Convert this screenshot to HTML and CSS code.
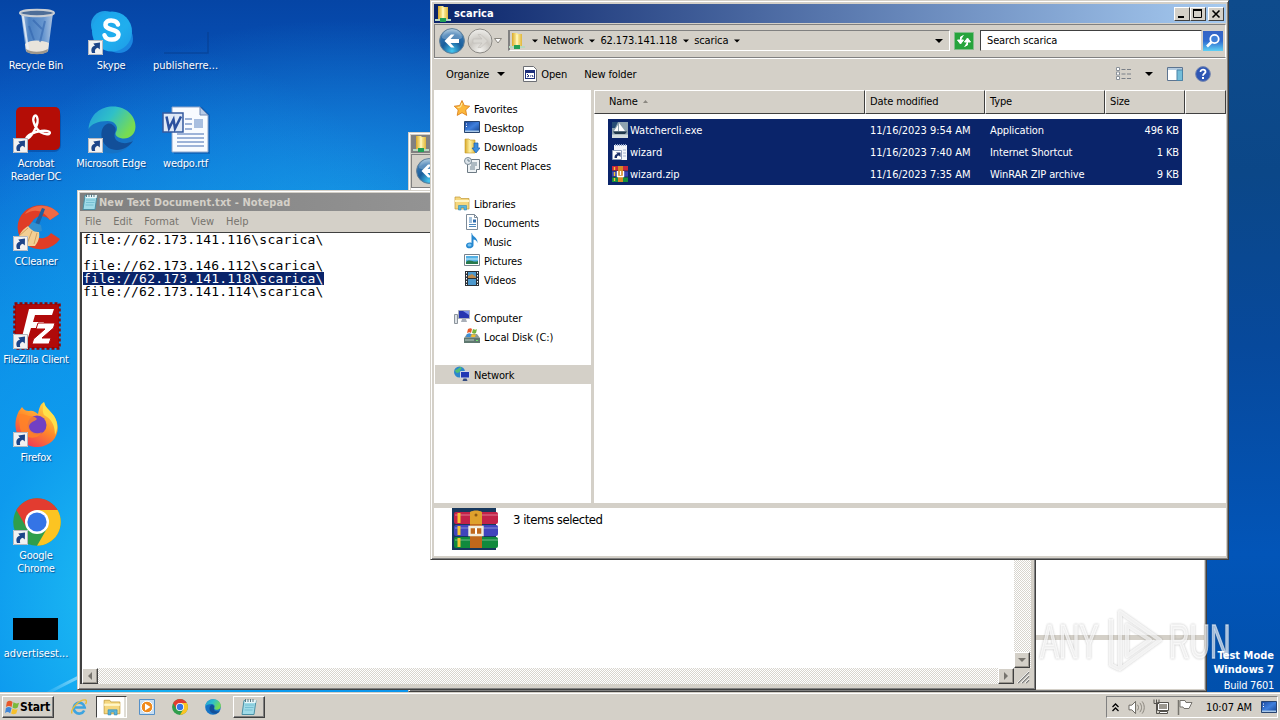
FILE: index.html
```html
<!DOCTYPE html>
<html lang="en">
<head>
    <meta charset="UTF-8">
    <meta name="viewport" content="width=device-width, initial-scale=1.0">
    <title>Desktop</title>
    <link rel="stylesheet" href="styles.css">
</head>
<body>
    <!-- Shared icons -->
    <svg width="0" height="0" class="defs">
        <defs>
            <linearGradient id="g-bin" x1="0" x2="1"><stop offset="0" stop-color="#d7e4f0"/><stop offset=".25" stop-color="#5d8fc8"/><stop offset=".7" stop-color="#7fa9d8"/><stop offset="1" stop-color="#d5e2ee"/></linearGradient>
            <linearGradient id="g-skype" x1="0" y1="0" x2="1" y2="1"><stop offset="0" stop-color="#1aa2ea"/><stop offset=".6" stop-color="#20aeee"/><stop offset="1" stop-color="#1e9ae6"/></linearGradient>
            <linearGradient id="g-edge" x1="0" y1="0" x2="1" y2=".5"><stop offset="0" stop-color="#2199dc"/><stop offset=".5" stop-color="#2fc0c8"/><stop offset="1" stop-color="#78dc50"/></linearGradient>
            <linearGradient id="g-fox" x1=".8" y1="0" x2=".2" y2="1"><stop offset="0" stop-color="#ffe04a"/><stop offset=".5" stop-color="#ff8a2a"/><stop offset="1" stop-color="#f0305a"/></linearGradient>
            <linearGradient id="g-folder" x1="0" y1="0" x2="1" y2="0"><stop offset="0" stop-color="#d9a928"/><stop offset=".5" stop-color="#fff2a4"/><stop offset="1" stop-color="#e0b63c"/></linearGradient>
            <linearGradient id="g-screen" x1="0" y1="0" x2="1" y2="1"><stop offset="0" stop-color="#16449c"/><stop offset=".5" stop-color="#3f7fdc"/><stop offset="1" stop-color="#12408c"/></linearGradient>
            <radialGradient id="g-back" cx=".5" cy=".9" r=".9"><stop offset="0" stop-color="#45c8f0"/><stop offset=".45" stop-color="#1a5f9c"/><stop offset=".75" stop-color="#2f70ac"/><stop offset="1" stop-color="#9ec0d8"/></radialGradient>
            <radialGradient id="g-fwd" cx=".5" cy=".9" r=".9"><stop offset="0" stop-color="#f4f3f0"/><stop offset=".5" stop-color="#c9c6c0"/><stop offset="1" stop-color="#efeeeb"/></radialGradient>
            <linearGradient id="g-search" x1="0" y1="0" x2="0" y2="1"><stop offset="0" stop-color="#3563c4"/><stop offset=".5" stop-color="#2f6cd0"/><stop offset="1" stop-color="#5ed0f4"/></linearGradient>
        </defs>

        <symbol id="i-shortcut" viewBox="0 0 15 15">
            <path d="M0 0h15v15H0z" fill="#f2f2f2"/><path d="M.5.5h14v14H.5z" fill="none" stroke="#b4b8c0"/>
            <path d="M4 13C2.500 9 4 6.300 7 5.800L5.300 3.500 12 2.500 11.800 9.500 9.800 7.800C7 8.500 6.500 10.500 7.200 13z" fill="#1c4488"/>
        </symbol>
        <symbol id="i-bin" viewBox="0 0 48 48">
            <path d="M8 5l5 38c4 4 18 4 22 0l5-38z" fill="url(#g-bin)" opacity=".8"/>
            <path d="M12 36c5-5 18-4 24-1l-1 8c-4 4-18 4-22 0z" fill="#e9e4dc"/>
            <path d="M13 41c6 4 17 3 22 0l-.5 3c-5 3-16 3-21 0z" fill="#9c968c"/>
            <path d="M16 18l5 14M32 13l-5 21M20 12l9 9" stroke="#2f62ac" stroke-width="2" opacity=".55"/>
            <path d="M10 8l5 33" stroke="#eef5fc" stroke-width="2" opacity=".8"/>
            <ellipse cx="24" cy="5" rx="17" ry="3.200" fill="#4e6e98" stroke="#c9ced4" stroke-width="2"/>
        </symbol>
        <symbol id="i-skype" viewBox="0 0 48 48">
            <circle cx="17" cy="17" r="14" fill="#1f9fe6"/><circle cx="31" cy="31" r="14" fill="#1a86e0"/>
            <circle cx="24" cy="23.500" r="20" fill="url(#g-skype)"/>
            <path d="M30 16.500c-1.500-5-12.500-6-12.500.3 0 6 13 3.500 13 10 0 6-12.500 6.500-14 .5" fill="none" stroke="#fff" stroke-width="4.500" stroke-linecap="round"/>
        </symbol>
        <symbol id="i-blank" viewBox="0 0 48 48"><path d="M2 45h44V24" fill="none" stroke="#063c8c" stroke-width="1.500" opacity=".6"/></symbol>
        <symbol id="i-acrobat" viewBox="0 0 48 48">
            <rect x="4" y="3" width="44" height="43" rx="7" fill="#053d90" opacity=".5"/>
            <rect x="3" y="1" width="44" height="43" rx="5" fill="#b40d06"/>
            <path d="M13 33c5 0 14-16 11-22-2-4-5 1-3 6 3 9 10 12 15 11 3-2-2-4-8-3-7 1-14 4-15 8z" fill="none" stroke="#fff" stroke-width="2.400"/>
        </symbol>
        <symbol id="i-edge" viewBox="0 0 48 48">
            <circle cx="24" cy="24" r="23.500" fill="#1673c6"/>
            <path d="M.5 23C2 8 13 .5 25 .5 39 .5 48 11 47.500 21c-.5 9-8 13-15 11-5-1.500-6-4-4-7 2-5-2-10-9-10C10 15 3 18 .5 23z" fill="url(#g-edge)"/>
            <path d="M19 18c-8 3-8 20 4 25 9 3 17-1 22-8-7 4-16 2-18-3-2-5 3-8-1-12-2-2-4-3-7-2z" fill="#124f99"/>
        </symbol>
        <symbol id="i-word" viewBox="0 0 48 48">
            <path d="M12 1h28l8 8v39H12z" fill="#0a4a9c" opacity=".45"/>
            <path d="M10 1h28l8 8v37H10z" fill="#f8fbff" stroke="#8fa4c8"/><path d="M38 1v8h8z" fill="#b9cbe6" stroke="#6f88b4"/>
            <path d="M23 13h7M23 18h7M23 23h7M15 28h27M15 32h27M15 36h27M15 40h27" stroke="#7f9ccc" stroke-width="1.500"/>
            <path d="M32 13h9v9h-9z" fill="#a9bfe0"/>
            <path d="M1 7h20v19H1z" fill="#dfe8f6" stroke="#35599f" stroke-width="1.500"/>
            <path d="M4.500 10.500l2.500 12 4.500-9 1.500 9 6-12" fill="none" stroke="#2a4f9e" stroke-width="2.500"/>
        </symbol>
        <symbol id="i-ccleaner" viewBox="0 0 48 48">
            <path d="M46 10A23 22 0 1 0 47 35L38 29A11 11 0 1 1 37 16z" fill="#df3d26"/>
            <path d="M46 10C38-1 19-1 12 10c10-6 18-4 25 6z" fill="#f06a44"/>
            <path d="M29 4l3 1-6 16-4-1z" fill="#205f9e"/>
            <path d="M19 18l9 3 1 6-9 2-6-5z" fill="#2f8fd0"/>
            <path d="M15 22c4 5 7 6 11 6 1 6-1 10-4 14H4c0-8 3-15 11-20z" fill="#f2cf94"/>
            <path d="M6 32l9-8M14 40l5-13M21 40l3-11" stroke="#d2a25e"/>
        </symbol>
        <symbol id="i-filezilla" viewBox="0 0 48 48">
            <path d="M2 2h44v44H2z" fill="#b00a0a"/><path d="M1.500 1.500h45v45h-45z" fill="none" stroke="#8c0606" stroke-width="2.500" stroke-dasharray="3 2"/>
            <path d="M16 7h25l-2 6H22l-2 7h11l-2 6H18l-4 13H8z" fill="#fff"/>
            <path d="M25 21h17l-1.500 5L29 36h9l-2 6H19l1.500-5L32 27h-9z" fill="#fff" stroke="#b00a0a"/>
        </symbol>
        <symbol id="i-firefox" viewBox="0 0 48 48">
            <path d="M5 13c1-3 3-4 4-6 2 3 4 4 7 4 4-1 6 1 9 3 1-5 2-10 6-12 1 6 6 8 10 14 9 14 1 30-16 31C9 48-3 31 5 13z" fill="url(#g-fox)"/>
            <circle cx="24" cy="25" r="9.500" fill="#7140c4"/>
            <path d="M5 14c6 0 8 1 11 2 4 0 7 1 8 3-3 3-6 2-8 7 0 6 7 9 13 6-4 9-20 7-22-4z" fill="#ff8228" opacity=".85"/>
            <path d="M31 2c1 6 6 8 10 14 4 7 4 13 1 19 0-9-3-16-11-20-2-4-1-9 0-13z" fill="#ffe04a"/>
        </symbol>
        <symbol id="i-chrome" viewBox="0 0 48 48">
            <circle cx="24" cy="24" r="23.800" fill="#2f9e4c"/>
            <path d="M24 24L3.400 12.100A23.800 23.800 0 0 1 44.600 12.100z" fill="#e23c30"/>
            <path d="M24 12.100h20.600A23.800 23.800 0 0 1 24 47.800l10.300-17.900z" fill="#fcc422"/>
            <path d="M3.400 12.100L13.700 30 24 24 24 12z" fill="#e23c30"/>
            <circle cx="24" cy="24" r="12" fill="#fff"/><circle cx="24" cy="24" r="9.600" fill="#3474e6"/>
        </symbol>
        <symbol id="i-black" viewBox="0 0 48 48"><path d="M0 22h45v22H0z"/></symbol>

        <symbol id="i-netfolder" viewBox="0 0 16 16">
            <path d="M3 0h5l1 1h4v12H3z" fill="url(#g-folder)"/><path d="M8 2v11" stroke="#fff9cc"/>
            <path d="M0 13h16v2H0z" fill="#b8d8c0"/><path d="M5 12h6v4H5z" fill="#22a055"/>
        </symbol>
        <symbol id="i-notepad" viewBox="0 0 16 16">
            <path d="M3 1.500h12l-2 14H1z" fill="#9fdbe8" stroke="#4a8fa4"/><path d="M4 1h11l-.4 3H3.500z" fill="#e8f6f8"/>
            <path d="M4.500 0v3M7 0v3M9.500 0v3M12 0v3" stroke="#587884"/><path d="M4 6h9M4 8.500h8.500M3.500 11h8" stroke="#6bb8cc" stroke-width=".8"/>
        </symbol>
        <symbol id="i-back" viewBox="0 0 26 26">
            <circle cx="13" cy="13" r="12.400" fill="url(#g-back)" stroke="#5c7c96"/>
            <path d="M3 10a10 9 0 0 1 20 0c-5 3-15 3-20 0z" fill="#fff" opacity=".25"/>
            <path d="M5.500 13L12 6.500h3.500L11.500 11H20v4h-8.500l4 4.500H12z" fill="#fff"/>
        </symbol>
        <symbol id="i-forward" viewBox="0 0 26 26">
            <circle cx="13" cy="13" r="12" fill="url(#g-fwd)" stroke="#8b8985"/>
            <path d="M20.500 13L14 6.500h-3l4 4.500H6v4h9l-4 4.500h3z" fill="#d9d7d2" stroke="#c1beb8" stroke-width=".6"/>
        </symbol>
        <symbol id="i-down" viewBox="0 0 8 8"><path d="M0 2h8L4 6z"/></symbol>
        <symbol id="i-refresh" viewBox="0 0 20 18">
            <path d="M.5.500h19v17H.5z" fill="#27a43c" stroke="#83bd8a"/>
            <path d="M9.500 3.500L6.500 5v4M3.500 8h6l-3 4z" fill="#fff" stroke="#fff"/><path d="M10.500 14.500l3-1.500V9M10.500 10h6l-3-4z" fill="#fff" stroke="#fff"/>
        </symbol>
        <symbol id="i-search" viewBox="0 0 20 20">
            <path d="M0 0h20v20H0z" fill="url(#g-search)"/><circle cx="11.500" cy="8" r="4.200" fill="#3f80d8" stroke="#fff" stroke-width="1.800"/>
            <path d="M8.500 11L4 15.500" stroke="#fff" stroke-width="2.600"/>
        </symbol>
        <symbol id="i-open" viewBox="0 0 16 16">
            <path d="M1.500.5h10l3 3v12h-13z" fill="#fff" stroke="#6c6e74"/><path d="M3 4h10v9H3z" fill="#1d2f7c"/><path d="M4 7h8v5H4z" fill="#fff"/>
            <path d="M5 8l2 2-2 1M8 10h1M10 9l1 2" fill="none" stroke="#1d2f7c"/>
        </symbol>
        <symbol id="i-views" viewBox="0 0 16 14">
            <path d="M.5.500h3v3h-3zM.5 5h3v3h-3zM.5 9.500h3v3h-3z" fill="#fff" stroke="#8b929a"/>
            <path d="M5.500 2.500h4M11 2.500h4M5.500 7h4M11 7h4M5.500 11.500h4M11 11.500h4" stroke="#7a8088"/>
        </symbol>
        <symbol id="i-pane" viewBox="0 0 16 14"><path d="M.5.500h15v13H.5z" fill="#fff" stroke="#5d7490"/><path d="M1 1h14v2H1z" fill="#b4cbe0"/><path d="M10 3h5.500v10.500H10z" fill="#74bdd8" stroke="#4b84a8"/></symbol>
        <symbol id="i-help" viewBox="0 0 16 16">
            <circle cx="8" cy="8" r="7.400" fill="#2e56b4" stroke="#7b8bb0"/><path d="M5.500 6c0-3.500 5.500-3 5 0C10.200 7.700 8 7.500 8 9.800" fill="none" stroke="#fff" stroke-width="1.800"/><path d="M7 11h2v2H7z" fill="#fff"/>
        </symbol>

        <symbol id="i-star" viewBox="0 0 16 16"><path d="M8 .5l2.300 5 5.400.7-4 3.700 1 5.500L8 12.700l-4.800 2.700 1-5.500-4-3.700 5.500-.7z" fill="#fcb83c" stroke="#d87a14" stroke-width=".8"/><path d="M8 3L6.500 7l-3 .5" fill="none" stroke="#fff0a8"/></symbol>
        <symbol id="i-desktop" viewBox="0 0 16 16"><path d="M.5 2.500h15v11H.5z" fill="url(#g-screen)" stroke="#274470"/><path d="M1 11.500h14v1.500H1z" fill="#a9c8e8"/><path d="M2 5h1M2 7.500h1" stroke="#fff"/></symbol>
        <symbol id="i-downloads" viewBox="0 0 16 16"><path d="M1 1h4l1 1h5v13H1z" fill="url(#g-folder)" stroke="#c49a2c" stroke-width=".6"/><path d="M10 5h4v5h2l-4 5-4-5h2z" fill="#3b8ee0" stroke="#1b5ca8" stroke-width=".7"/></symbol>
        <symbol id="i-recent" viewBox="0 0 16 16"><path d="M5.500 2.500h10v10h-3v3h-9v-10h2z" fill="#eef2f4" stroke="#6d7a84"/><circle cx="4" cy="4" r="3.500" fill="#dce4ea" stroke="#7c8c98"/><path d="M4 2v2h2M7 6h6M7 8h6M6 10h5M6 12h5" fill="none" stroke="#6c8290"/></symbol>
        <symbol id="i-libraries" viewBox="0 0 16 16"><path d="M1 2h5l1 1.500h8V14H1z" fill="#f5d77e" stroke="#c29a38" stroke-width=".7"/><path d="M1 6h14" stroke="#fff6c8" stroke-width="2"/><path d="M4.500 15v-4.500h8V15h-2.500v-2.500H7V15z" fill="#58b6dc" stroke="#3488b4" stroke-width=".6"/></symbol>
        <symbol id="i-doc" viewBox="0 0 16 16"><path d="M2.500.5h8l3 3v12h-11z" fill="#fff" stroke="#7c8a98"/><path d="M10.500.500v3h3" fill="none" stroke="#7c8a98"/><path d="M5 4h3M5 6h3M5 8h3M5 10.500h7M5 12.500h7" stroke="#4b86bc"/><path d="M9 5.500h3v3H9z" fill="#2f6cac"/></symbol>
        <symbol id="i-music" viewBox="0 0 16 16"><path d="M8 0c0 4 6 4 5.500 10C12.500 7 11 6.500 9.500 6.500v6C9 16 2 16.500 2 12.500 2 10 5.500 9 7.500 10V0z" fill="#2688d0"/><ellipse cx="5.500" cy="12" rx="2" ry="1.500" fill="#74c0f0"/></symbol>
        <symbol id="i-pictures" viewBox="0 0 16 16"><path d="M.5 2.500h15v11H.5z" fill="#fff" stroke="#78828c"/><path d="M2 4h12v8H2z" fill="#53b0e4"/><path d="M2 10c4-4 7 1 12-1v3H2z" fill="#28794c"/><path d="M2 7h12" stroke="#c5ecfa"/></symbol>
        <symbol id="i-videos" viewBox="0 0 16 16"><path d="M1 0h14v15H1z" fill="#2b3036"/><path d="M4 1h8v6H4zM4 8h8v6H4z" fill="#4c98cc"/><path d="M4 5l4-2 4 3v1H4z" fill="#bf8c4c"/><path d="M2.500 1v13M13.500 1v13" stroke="#fff" stroke-dasharray="1.500 1.500"/></symbol>
        <symbol id="i-computer" viewBox="0 0 16 16"><path d="M.5 5.500h3v9h-3z" fill="#dde2e6" stroke="#8c949c"/><path d="M4.500 1.500h11v8h-11z" fill="#2536b0" stroke="#a9b0bc"/><path d="M9 2h6v4z" fill="#7a92ea"/><path d="M8 10h4l1 3H7z" fill="#a9afb8"/></symbol>
        <symbol id="i-disk" viewBox="0 0 16 16"><path d="M0 10l3-4h10l3 4v5H0z" fill="#8d9a96"/><path d="M0 10h16v5H0z" fill="#5f7870"/><path d="M1 12h9" stroke="#b9cac4"/><path d="M12 12h2v1h-2z" fill="#6fe06c"/><path d="M4 1c2-1 3-1 4 0L7 5c-1-1-2-1-4 0z" fill="#ea5a28"/><path d="M9 1c2 1 3 1 4 0l-1 4c-1 1-2 1-4 0z" fill="#76b43c"/><path d="M3 6c2-1 3-1 4 0L6 9H2z" fill="#3d8ed4"/><path d="M8 6c2 1 3 1 4 0l-1 3H7z" fill="#f2c02c"/></symbol>
        <symbol id="i-network" viewBox="0 0 16 16"><circle cx="5.500" cy="6" r="5.500" fill="#2c86cc"/><path d="M1 4c3 0 4-3 6-3 2 2-2 3-1 5-2 1-4 2-5-2z" fill="#4ebe74"/><path d="M6.500 5.500h9v6.500h-9z" fill="#2038b4" stroke="#d0d8e4"/><path d="M9.500 12.500h3l1 2.500h-5z" fill="#334a80"/></symbol>

        <symbol id="i-exe" viewBox="0 0 16 16"><path d="M0 0h16v16H0z" fill="#8fa3b0"/><path d="M0 0h6l-3 6H0z" fill="#254b74"/><path d="M7 1l6 8H7zM6 3v6H2z" fill="#fff"/><path d="M1 9.500h14l-2 2.500H3z" fill="#20384c"/><path d="M0 12.500h16V16H0z" fill="#d4dde0"/></symbol>
        <symbol id="i-url" viewBox="0 0 16 16"><path d="M2 1h13v15H2z" fill="#f3f5fa"/><path d="M3 1h12" stroke="#93a7cc" stroke-width="2" stroke-dasharray="1 1"/><path d="M.5 6.500h9v9h-9z" fill="#fff" stroke="#8d9cba"/><path d="M2.500 14c0-3 1-4 3-4L4 8.500h4.500V13L7 11.500c-2 0-2 1-2 2.500z" fill="#1b2f68"/><path d="M11 6h3M11 9h3M11 12h3" stroke="#a5b3ce"/></symbol>
        <symbol id="i-rar" viewBox="0 0 46 42">
            <path d="M0 0h44v42H0z" fill="#17385e"/>
            <rect x="2" y="4" width="44" height="12" rx="2" fill="#c32248"/><rect x="2" y="17" width="44" height="11" rx="2" fill="#4144bd"/><rect x="2" y="29" width="44" height="11" rx="2" fill="#118a3d"/>
            <path d="M3 7h43M3 20h43M3 32h43" stroke="#fff" stroke-width="2" opacity=".2"/>
            <path d="M7 5v10M7 18v9M7 30v9" stroke="#f6c530" stroke-width="3"/>
            <path d="M18 4c3-2 9-2 12 0v13H18z" fill="#dfa12c"/><path d="M18 16h12v24H18z" fill="#c0681c"/>
            <path d="M17.500 19v8h13v-8z" fill="none" stroke="#f0ecdc" stroke-width="2.400"/><path d="M24 20v6" stroke="#fff" stroke-width="2"/><circle cx="24" cy="7" r="1.500" fill="#8c5b14"/>
        </symbol>
        <symbol id="i-zip" viewBox="0 0 16 16">
            <path d="M0 0h16v5H0z" fill="#c8283c"/><path d="M0 5h16v6H0z" fill="#3a44b4"/><path d="M0 11h16v5H0z" fill="#16903c"/>
            <path d="M0 5h16M0 11h16" stroke="#122450" stroke-width=".8"/><path d="M2.500 1v3M2.500 6v4M2.500 12v3" stroke="#f6c530" stroke-width="1.400"/>
            <path d="M6 0h5v16H6z" fill="#d68a24"/><path d="M5.500 5v5.500h6V5M8.500 5v4" fill="none" stroke="#fff" stroke-width="1.400"/>
        </symbol>

        <symbol id="i-flag" viewBox="0 0 16 16"><path d="M2 2c2-1.500 4-1.500 6 0L7 7.500c-2-1.500-4-1.500-6 0z" fill="#e8582a"/><path d="M9 2.500c2 1.500 4 1.500 6 .5l-1.500 5c-2 1.500-4 1-5.500 0z" fill="#7bb93c"/><path d="M1 8.500c2-1.500 4-1.500 6 0L5.500 14c-2-1.500-4-1.500-5.500 0z" fill="#3f86d8"/><path d="M8 9c2 1.500 4 1.500 5.500.5L12 14.500c-2 1-4 1-5.500 0z" fill="#f7c02c"/></symbol>
        <symbol id="i-ie" viewBox="0 0 16 16"><path d="M13.200 11.500A5.500 5.500 0 1 1 13.700 8.500H4" fill="none" stroke="#3da4e0" stroke-width="2.600"/><path d="M1 14.500C-1 10 9 0 14.500 1c1.500.5 1 2.500 0 4" fill="none" stroke="#e8bc38" stroke-width="1.400"/></symbol>
        <symbol id="i-wmp" viewBox="0 0 16 16"><path d="M.5.500h15v15H.5z" fill="#c8def2" stroke="#5590c8"/><circle cx="8" cy="8" r="5.800" fill="#f08a1c" stroke="#fff"/><path d="M6 4.500L11.500 8 6 11.500z" fill="#fff"/></symbol>
        <symbol id="i-speaker" viewBox="0 0 18 16"><path d="M1 5.500h3l4-4v13l-4-4H1z" fill="#fff" stroke="#65625c"/><path d="M10 5c1.500 2 1.500 4 0 6M12.500 3c2.500 3 2.500 7 0 10M15 1.500c3 4 3 9 0 13" fill="none" stroke="#858179"/></symbol>
        <symbol id="i-traynet" viewBox="0 0 16 16"><path d="M4.500 3.500h11v8h-11z" fill="#fff" stroke="#55524d"/><path d="M6 5h8v5H6z" fill="#9b978f"/><path d="M6.500 12.500h8v2h-8z" fill="#fff" stroke="#55524d"/><path d="M1 .5v4h5v-4M3.500 .5v14h3" fill="none" stroke="#55524d"/></symbol>
        <symbol id="i-trayflag" viewBox="0 0 16 16"><path d="M1.500 1v15" stroke="#77746e" stroke-width="1.500"/><path d="M3 1.500h5l1 2h6l-3 6H7l-1-1.500H3z" fill="#fff" stroke="#77746e"/></symbol>
    </svg>

    <div class="desktop">
        <div class="streak"></div>
        <div class="shortcuts">
            <div class="shortcut"><div class="shortcut-icon"><svg><use href="#i-bin"/></svg></div><span>Recycle Bin</span></div>
            <div class="shortcut"><div class="shortcut-icon"><svg><use href="#i-acrobat"/></svg><svg class="badge"><use href="#i-shortcut"/></svg></div><span>Acrobat<br>Reader DC</span></div>
            <div class="shortcut"><div class="shortcut-icon"><svg><use href="#i-ccleaner"/></svg><svg class="badge"><use href="#i-shortcut"/></svg></div><span>CCleaner</span></div>
            <div class="shortcut"><div class="shortcut-icon"><svg><use href="#i-filezilla"/></svg><svg class="badge"><use href="#i-shortcut"/></svg></div><span>FileZilla Client</span></div>
            <div class="shortcut"><div class="shortcut-icon"><svg><use href="#i-firefox"/></svg><svg class="badge"><use href="#i-shortcut"/></svg></div><span>Firefox</span></div>
            <div class="shortcut"><div class="shortcut-icon"><svg><use href="#i-chrome"/></svg><svg class="badge"><use href="#i-shortcut"/></svg></div><span>Google<br>Chrome</span></div>
            <div class="shortcut"><div class="shortcut-icon"><svg><use href="#i-black"/></svg></div><span class="clipped">advertisest...</span></div>
            <div class="shortcut"><div class="shortcut-icon"><svg><use href="#i-skype"/></svg><svg class="badge"><use href="#i-shortcut"/></svg></div><span>Skype</span></div>
            <div class="shortcut"><div class="shortcut-icon"><svg><use href="#i-edge"/></svg><svg class="badge"><use href="#i-shortcut"/></svg></div><span>Microsoft Edge</span></div>
            <div class="shortcut third"><div class="shortcut-icon"><svg><use href="#i-blank"/></svg></div><span class="clipped">publisherre...</span></div>
            <div class="shortcut third second-row"><div class="shortcut-icon"><svg><use href="#i-word"/></svg></div><span>wedpo.rtf</span></div>
        </div>

        <!-- Explorer window at the back -->
        <div class="window window-back">
            <div class="titlebar inactive"><svg class="icon16"><use href="#i-netfolder"/></svg></div>
            <div class="navbar"><svg class="nav-back"><use href="#i-back"/></svg></div>
            <div class="back-content"></div>
            <div class="back-details"></div>
        </div>

        <!-- Notepad -->
        <div class="window notepad">
            <div class="titlebar inactive"><svg class="icon16"><use href="#i-notepad"/></svg><span class="title">New Text Document.txt - Notepad</span></div>
            <div class="menu"><span>File</span><span>Edit</span><span>Format</span><span>View</span><span>Help</span></div>
            <div class="editor">
                <div class="text">
                    <div>file://62.173.141.116\scarica\</div>
                    <div>&nbsp;</div>
                    <div>file://62.173.146.112\scarica\</div>
                    <div><span class="marked">file://62.173.141.118\scarica\</span></div>
                    <div>file://62.173.141.114\scarica\</div>
                </div>
                <div class="scroll-v"><div class="scroll-btn"><svg><use href="#i-down"/></svg></div></div>
                <div class="scroll-h">
                    <div class="scroll-btn left"><svg><use href="#i-down"/></svg></div>
                    <div class="scroll-btn right"><svg><use href="#i-down"/></svg></div>
                </div>
                <svg class="grip" viewBox="0 0 17 16"><path d="M0 0h17v16H0z" fill="#d4d0c8"/><path d="M4 15L15 4M8 15l7-7M12 15l3-3" stroke="#808080" stroke-width="1.500"/><path d="M3 15L15 3M7 15l8-8M11 15l4-4" stroke="#fff" stroke-width=".8"/></svg>
            </div>
        </div>

        <!-- Explorer -->
        <div class="window explorer">
            <div class="titlebar">
                <svg class="icon16"><use href="#i-netfolder"/></svg><span class="title">scarica</span>
                <div class="caption-btns">
                    <div class="caption-btn"><svg viewBox="0 0 14 12"><path d="M3 9h6" stroke="#000" stroke-width="2"/></svg></div>
                    <div class="caption-btn"><svg viewBox="0 0 14 12"><path d="M2.500 2.500h8v7h-8z" fill="none" stroke="#000"/><path d="M2 2h9" stroke="#000" stroke-width="2"/></svg></div>
                    <div class="caption-btn close"><svg viewBox="0 0 14 12"><path d="M3.500 2.500l7 7M10.500 2.500l-7 7" stroke="#000" stroke-width="1.600"/></svg></div>
                </div>
            </div>
            <div class="navbar">
                <svg class="nav-back"><use href="#i-back"/></svg>
                <svg class="nav-forward"><use href="#i-forward"/></svg>
                <svg class="nav-history" viewBox="0 0 8 6"><path d="M.5.5h7L4 5z" fill="#fff" stroke="#8a8780"/></svg>
                <div class="address">
                    <svg class="icon16"><use href="#i-netfolder"/></svg>
                    <svg class="arrow first"><use href="#i-down"/></svg>
                    <span>Network</span><svg class="arrow"><use href="#i-down"/></svg>
                    <span>62.173.141.118</span><svg class="arrow"><use href="#i-down"/></svg>
                    <span>scarica</span><svg class="arrow"><use href="#i-down"/></svg>
                    <svg class="arrow last"><use href="#i-down"/></svg>
                </div>
                <svg class="refresh"><use href="#i-refresh"/></svg>
                <div class="search">Search scarica</div>
                <svg class="search-btn"><use href="#i-search"/></svg>
            </div>
            <div class="toolbar">
                <span>Organize</span><svg class="arrow"><use href="#i-down"/></svg>
                <svg class="icon16 open-icon"><use href="#i-open"/></svg><span>Open</span>
                <span class="new-folder">New folder</span>
                <div class="toolbar-right">
                    <svg class="views"><use href="#i-views"/></svg>
                    <svg class="arrow"><use href="#i-down"/></svg>
                    <svg class="views pane"><use href="#i-pane"/></svg>
                    <svg class="icon16"><use href="#i-help"/></svg>
                </div>
            </div>
            <div class="main">
                <div class="tree">
                    <div class="node"><svg class="icon16"><use href="#i-star"/></svg><span>Favorites</span></div>
                    <div class="node child"><svg class="icon16"><use href="#i-desktop"/></svg><span>Desktop</span></div>
                    <div class="node child"><svg class="icon16"><use href="#i-downloads"/></svg><span>Downloads</span></div>
                    <div class="node child"><svg class="icon16"><use href="#i-recent"/></svg><span>Recent Places</span></div>
                    <div class="node group"><svg class="icon16"><use href="#i-libraries"/></svg><span>Libraries</span></div>
                    <div class="node child"><svg class="icon16"><use href="#i-doc"/></svg><span>Documents</span></div>
                    <div class="node child"><svg class="icon16"><use href="#i-music"/></svg><span>Music</span></div>
                    <div class="node child"><svg class="icon16"><use href="#i-pictures"/></svg><span>Pictures</span></div>
                    <div class="node child"><svg class="icon16"><use href="#i-videos"/></svg><span>Videos</span></div>
                    <div class="node group"><svg class="icon16"><use href="#i-computer"/></svg><span>Computer</span></div>
                    <div class="node child"><svg class="icon16"><use href="#i-disk"/></svg><span>Local Disk (C:)</span></div>
                    <div class="node group current"><svg class="icon16"><use href="#i-network"/></svg><span>Network</span></div>
                </div>
                <div class="list">
                    <div class="columns">
                        <div>Name <svg class="sort" viewBox="0 0 5 3"><path d="M0 3h5L2.500 0z" fill="#8a8780"/></svg></div>
                        <div>Date modified</div><div>Type</div><div>Size</div><div></div>
                    </div>
                    <div class="files">
                        <div class="file"><span class="name"><svg class="icon16"><use href="#i-exe"/></svg>Watchercli.exe</span><span class="date">11/16/2023 9:54 AM</span><span>Application</span><span class="size">496 KB</span></div>
                        <div class="file"><span class="name"><svg class="icon16"><use href="#i-url"/></svg>wizard</span><span class="date">11/16/2023 7:40 AM</span><span>Internet Shortcut</span><span class="size">1 KB</span></div>
                        <div class="file"><span class="name"><svg class="icon16"><use href="#i-zip"/></svg>wizard.zip</span><span class="date">11/16/2023 7:35 AM</span><span>WinRAR ZIP archive</span><span class="size">9 KB</span></div>
                    </div>
                </div>
            </div>
            <div class="details">
                <svg class="preview"><use href="#i-rar"/></svg>
                <span>3 items selected</span>
            </div>
        </div>

        <div class="watermark">
            <span>ANY</span>
            <svg viewBox="0 0 56 64"><path d="M13 3L53 31 13 60zM4 10v46l8 4M20 16l23 15-23 16z" fill="none" stroke="#fff" stroke-width="4" stroke-linejoin="round"/></svg>
            <span>RUN</span>
        </div>

        <div class="build"><b>Test Mode</b><b>Windows 7</b><span>Build 7601</span></div>

        <div class="taskbar">
            <div class="start"><svg><use href="#i-flag"/></svg>Start</div>
            <div class="task ie"><svg class="icon16"><use href="#i-ie"/></svg></div>
            <div class="task pressed"><svg><use href="#i-libraries"/></svg></div>
            <div class="task"><svg class="icon16"><use href="#i-wmp"/></svg></div>
            <div class="task"><svg class="icon16"><use href="#i-chrome"/></svg></div>
            <div class="task"><svg class="icon16"><use href="#i-edge"/></svg></div>
            <div class="task raised"><svg class="icon16"><use href="#i-notepad"/></svg></div>
            <div class="tray">
                <svg class="chevron" viewBox="0 0 7 9"><path d="M.5 4l3-3 3 3M.5 8l3-3 3 3" fill="none" stroke="#000" stroke-width="1.300"/></svg>
                <svg class="speaker"><use href="#i-speaker"/></svg>
                <svg class="icon16"><use href="#i-traynet"/></svg>
                <svg class="icon16"><use href="#i-trayflag"/></svg>
                <span class="clock">10:07 AM</span>
                <svg class="icon16"><use href="#i-desktop"/></svg>
            </div>
        </div>
    </div>
</body>
</html>
```
FILE: styles.css
```css
* {
    box-sizing: border-box;
}

body {
    margin: 0;
    overflow: hidden;
    font-family: "DejaVu Sans Condensed", "DejaVu Sans", sans-serif;
    font-stretch: condensed;
    font-size: 11px;
    letter-spacing: -0.13px;
    color: #000;
}

svg {
    display: block;
    flex: none;
}

.defs {
    position: absolute;
}

.icon16 {
    width: 16px;
    height: 16px;
}

.desktop {
    position: relative;
    width: 1280px;
    height: 720px;
    overflow: hidden;
    background:
        radial-gradient(ellipse 420px 560px at 130px 600px, #1fc0f4 0%, rgba(14, 158, 240, 0.85) 35%, rgba(10, 120, 220, 0) 100%),
        radial-gradient(ellipse 360px 220px at 340px 240px, rgba(26, 160, 232, 0.9) 0%, rgba(18, 130, 220, 0) 100%),
        linear-gradient(#0545a5, #0a5cc8 20%, #0c80dc 45%, #0a8ee8);
}

/* blue of the wallpaper at the right edge */
.desktop::before {
    content: "";
    position: absolute;
    right: 0;
    top: 0;
    width: 74px;
    height: 692px;
    background: linear-gradient(#0e4b8c, #0b4788 25%, #07499c 50%, #0255b8 80%, #0150ac);
}

.streak {
    position: absolute;
    left: 40px;
    top: 680px;
    width: 60px;
    height: 3px;
    background: linear-gradient(to right, transparent, #b9ecff);
    transform: rotate(-27deg);
}

/* Desktop icons */
.shortcuts {
    display: grid;
    grid-auto-flow: column;
    grid-template-rows: repeat(7, 98px);
    grid-template-columns: 72px 78px 71px;
    padding-top: 8px;
    width: 222px;
}

.shortcut {
    display: flex;
    flex-direction: column;
    align-items: center;
    color: #fff;
    line-height: 13px;
    letter-spacing: -0.25px;
    text-align: center;
    white-space: nowrap;
    text-shadow: 1px 1px 1px rgba(0, 30, 90, 0.6);
}

.shortcut.third {
    grid-column: 3;
    grid-row: 1;
}

.shortcut.second-row {
    grid-row: 2;
}

.clipped {
    letter-spacing: 0;
}

.shortcut-icon {
    position: relative;
    width: 48px;
    height: 48px;
    margin-bottom: 3px;
    left: 1px;
}

.third .shortcut-icon {
    left: 0;
}

.shortcut-icon svg {
    width: 48px;
    height: 48px;
}

.shortcut-icon .badge {
    position: absolute;
    left: 0;
    bottom: 1px;
    width: 15px;
    height: 15px;
}

/* Windows */
.window {
    position: absolute;
    display: flex;
    flex-direction: column;
    padding: 2px;
    background: #d4d0c8;
    border: 1px solid;
    border-color: #d4d0c8 #404040 #404040 #d4d0c8;
    box-shadow: inset 1px 1px #fff, inset -1px -1px #808080;
}

.titlebar {
    display: flex;
    align-items: center;
    flex: none;
    height: 18px;
    padding-left: 2px;
    color: #fff;
    background: linear-gradient(to right, #0a246a, #a6caf0);
}

.titlebar.inactive {
    background: linear-gradient(to right, #808080, #b4b4b4);
    color: #d4d0c8;
}

.title {
    margin-left: 3px;
    font-weight: bold;
    letter-spacing: 0.08px;
}

.caption-btns {
    display: flex;
    margin-left: auto;
    padding-right: 2px;
}

.caption-btn {
    width: 16px;
    height: 14px;
    background: #d4d0c8;
    border: 1px solid;
    border-color: #fff #404040 #404040 #fff;
}

.caption-btn.close {
    margin-left: 2px;
}

.window-back {
    left: 408px;
    top: 132px;
    width: 799px;
    height: 560px;
}

.back-content {
    height: 447px;
    background: #fff;
}

.back-details {
    flex: 1;
    margin-top: 5px;
    background: #fff;
}

/* Notepad */
.notepad {
    left: 77px;
    top: 190px;
    width: 959px;
    height: 500px;
}

.notepad .title {
    margin-left: 1px;
}

.menu {
    display: flex;
    align-items: center;
    gap: 12px;
    height: 21px;
    padding-left: 5px;
    color: #77746e;
    letter-spacing: -0.05px;
}

.editor {
    display: grid;
    grid-template-columns: 1fr 17px;
    grid-template-rows: 1fr 16px;
    flex: 1;
    margin: 0 2px 3px 0;
    background: #fff;
    border-top: 1px solid #404040;
    border-left: 2px solid #404040;
}

.text {
    padding-left: 1px;
    font-family: "DejaVu Sans Mono", monospace;
    font-stretch: normal;
    font-size: 13px;
    line-height: 13px;
    letter-spacing: 0.19px;
}

.marked {
    display: inline-block;
    background: #0a246a;
    color: #fff;
}

.scroll-v,
.scroll-h {
    display: flex;
    background: repeating-conic-gradient(#d8d5ce 0 25%, #fff 0 50%) 0 0 / 2px 2px;
}

.scroll-v {
    align-items: flex-end;
}

.scroll-h {
    justify-content: space-between;
}

.scroll-btn {
    display: flex;
    align-items: center;
    justify-content: center;
    width: 16px;
    height: 16px;
    background: #d4d0c8;
    border: 1px solid;
    border-color: #fff #404040 #404040 #fff;
    box-shadow: inset -1px -1px #9a968e;
}

.scroll-btn svg {
    width: 8px;
    height: 8px;
    fill: #77746e;
}

.scroll-btn.left svg {
    transform: rotate(90deg);
}

.scroll-btn.right svg {
    transform: rotate(-90deg);
}

.grip {
    width: 17px;
    height: 16px;
}

/* Explorer */
.explorer {
    left: 430px;
    top: 0;
    width: 799px;
    height: 560px;
    padding: 3px 2px 3px 3px;
}

.explorer .titlebar {
    height: 19px;
    padding-left: 1px;
}

.navbar {
    display: flex;
    align-items: center;
    flex: none;
    height: 34px;
    margin-top: 1px;
    padding: 0 0 1px 4px;
    border: 1px solid;
    border-color: #808080 #fff #808080 #808080;
    box-shadow: 0 1px #fff;
}

.nav-back,
.nav-forward {
    width: 26px;
    height: 26px;
}

.nav-forward {
    margin-left: 2px;
}

.nav-history {
    width: 8px;
    height: 6px;
    margin-left: 1px;
}

.address {
    display: flex;
    align-items: center;
    width: 442px;
    height: 21px;
    margin-left: 6px;
    border: 1px solid;
    border-color: #808080 #fff #fff #808080;
    border-left-width: 2px;
}

.address .icon16 {
    margin-left: -1px;
}

.arrow {
    width: 6px;
    height: 6px;
    margin: 0 5px 0 6px;
}

.arrow.first {
    margin: 0 5px 0 7px;
}

.arrow.last {
    width: 8px;
    height: 8px;
    margin: 0 6px 0 auto;
}

.refresh {
    width: 20px;
    height: 18px;
    margin-left: 4px;
}

.search {
    width: 222px;
    height: 21px;
    margin-left: 6px;
    padding-left: 6px;
    line-height: 19px;
    background: #fff;
    border: 1px solid;
    border-color: #404040 #d4d0c8 #d4d0c8 #404040;
}

.search-btn {
    width: 20px;
    height: 20px;
    margin-left: 1px;
}

.toolbar {
    display: flex;
    align-items: center;
    flex: none;
    height: 32px;
    padding-left: 12px;
}

.toolbar .arrow {
    width: 8px;
    height: 8px;
    margin: 0 0 0 8px;
}

.toolbar .open-icon {
    margin: 0 3px 0 17px;
}

.new-folder {
    margin-left: 17px;
}

.toolbar-right {
    display: flex;
    align-items: center;
    margin-left: auto;
    padding-right: 15px;
}

.toolbar .toolbar-right .arrow {
    margin: 0 14px 0 13px;
}

.views {
    width: 16px;
    height: 14px;
}

.pane {
    margin-right: 12px;
}

.main {
    display: flex;
    flex: none;
    gap: 3px;
    height: 413px;
}

.tree {
    width: 157px;
    padding: 9px 0 0 1px;
    background: #fff;
}

.node {
    display: flex;
    align-items: center;
    gap: 4px;
    height: 19px;
    padding-left: 19px;
}

.node .icon16 {
    margin-top: -1px;
}

.node span {
    padding-top: 1px;
}

.node.child {
    padding-left: 29px;
}

.node.group {
    margin-top: 19px;
}

.node.current {
    background: #d4d0c8;
}

.list {
    flex: 1;
    background: #fff;
}

.columns {
    display: grid;
    grid-template-columns: 271px 120px 120px 80px 41px;
    height: 23px;
    line-height: 22px;
}

.columns div {
    padding-left: 4px;
    background: #d4d0c8;
    border: 1px solid;
    border-color: #fff #404040 #404040 #fff;
}

.columns div:first-child {
    display: flex;
    align-items: center;
    padding-left: 14px;
}

.sort {
    width: 5px;
    height: 3px;
    margin: -2px 0 0 5px;
}

.files {
    width: 574px;
    margin: 6px 0 0 14px;
    background: #0a246a;
    color: #fff;
}

.file {
    display: grid;
    grid-template-columns: 262px 120px 120px 1fr;
    align-items: center;
    height: 22px;
}

.name {
    display: flex;
    align-items: center;
    gap: 2px;
    padding-left: 4px;
    letter-spacing: 0;
}

.date {
    letter-spacing: -0.02px;
}

.size {
    padding-right: 3px;
    text-align: right;
}

.details {
    display: flex;
    flex: 1;
    margin-top: 5px;
    padding-left: 18px;
    background: #fff;
    font-size: 13px;
}

.preview {
    width: 46px;
    height: 42px;
}

.details span {
    margin: 4px 0 0 15px;
    letter-spacing: -0.45px;
}

/* Text over the wallpaper */
.build {
    position: absolute;
    right: 6px;
    top: 649px;
    display: flex;
    flex-direction: column;
    align-items: flex-end;
    line-height: 14px;
    color: #fff;
    letter-spacing: 0;
}

.build span {
    margin-top: 2px;
    letter-spacing: -0.3px;
}

.watermark {
    position: absolute;
    left: 1040px;
    top: 609px;
    display: flex;
    align-items: center;
    gap: 6px;
    font-family: "Liberation Sans", Arial, sans-serif;
    font-stretch: normal;
    font-size: 49px;
    line-height: 40px;
    letter-spacing: 0;
    color: rgba(255, 255, 255, 0.72);
    -webkit-text-stroke: 1.5px rgba(255, 255, 255, 0.72);
    filter: drop-shadow(0 0 1px rgba(60, 60, 60, 0.45));
    opacity: 0.85;
}

.watermark span {
    width: 61px;
    transform: scaleX(0.58);
    transform-origin: 0 0;
}

.watermark svg {
    width: 56px;
    height: 64px;
    opacity: 0.75;
}

/* Taskbar */
.taskbar {
    position: absolute;
    left: 0;
    right: 0;
    bottom: 0;
    display: flex;
    align-items: center;
    height: 28px;
    padding: 2px 2px 0;
    background: #d4d0c8;
    box-shadow: inset 0 1px #d4d0c8, inset 0 2px #fff;
}

.start {
    display: flex;
    align-items: center;
    width: 52px;
    height: 22px;
    padding-left: 2px;
    font-size: 12px;
    font-weight: bold;
    border: 1px solid;
    border-color: #fff #404040 #404040 #fff;
    box-shadow: inset -1px -1px #808080;
}

.start svg {
    width: 15px;
    height: 15px;
}

.task {
    display: flex;
    align-items: center;
    justify-content: center;
    width: 33px;
    height: 22px;
}

.task.ie {
    margin-left: 8px;
}

.task.pressed {
    width: 31px;
    margin: 0 3px 0 1px;
    background: #fff;
    border: 1px solid;
    border-color: #404040 #fff #fff #404040;
    box-shadow: inset -2px 0 #e0ddd6;
}

.pressed svg {
    width: 18px;
    height: 18px;
}

.task.raised {
    width: 32px;
    margin-left: 4px;
    border: 1px solid;
    border-color: #fff #404040 #404040 #fff;
    box-shadow: inset -1px -1px #808080;
}

.tray {
    display: flex;
    align-items: center;
    gap: 8px;
    width: 172px;
    height: 22px;
    margin-left: auto;
    padding-left: 5px;
    border: 1px solid;
    border-color: #808080 #fff #fff #808080;
}

.chevron {
    width: 7px;
    height: 9px;
    margin-right: 1px;
}

.speaker {
    width: 17px;
    height: 15px;
}

.clock {
    width: 47px;
    margin-left: 5px;
    white-space: nowrap;
}
```
